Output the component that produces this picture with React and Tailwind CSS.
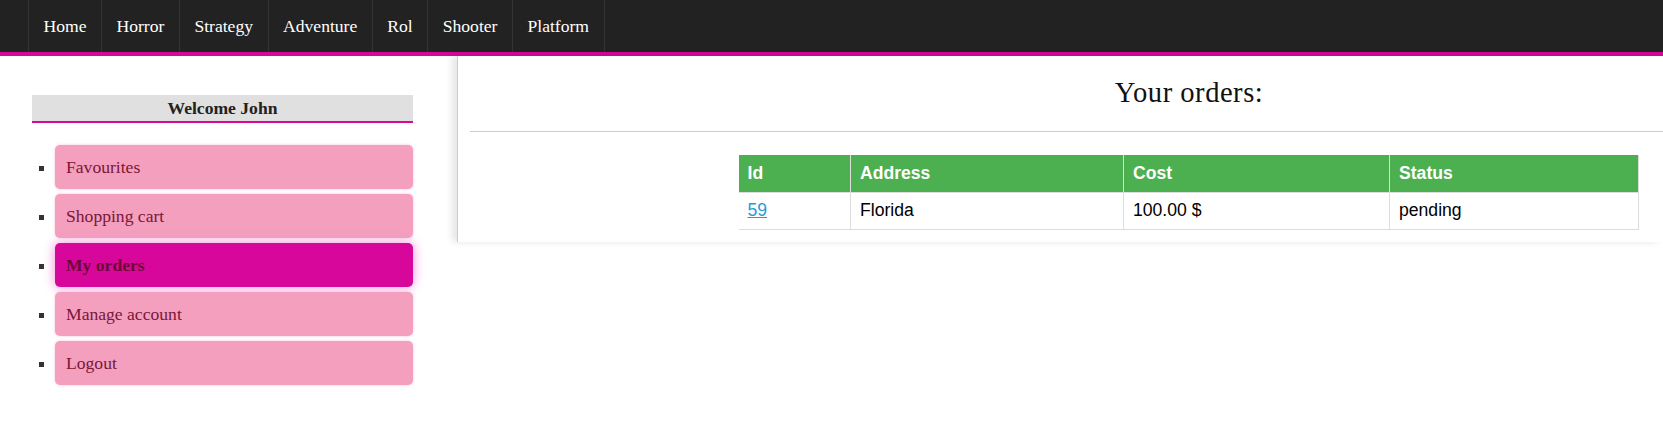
import React from 'react';

const categories = ['Home', 'Horror', 'Strategy', 'Adventure', 'Rol', 'Shooter', 'Platform'];

const menu = [
  { label: 'Favourites' },
  { label: 'Shopping cart' },
  { label: 'My orders', active: true },
  { label: 'Manage account' },
  { label: 'Logout' },
];

const orders = [{ id: 59, address: 'Florida', cost: '100.00 $', status: 'pending' }];

export default function App() {
  return (
    <div className="min-h-[431px] bg-white font-['Liberation_Serif',serif]">
      {/* Top navigation */}
      <nav className="flex h-[56px] border-b-4 border-[#d6079a] bg-[#222222] pl-[28px]">
        {categories.map((c, i) => (
          <a
            key={c}
            href="#"
            className={`border-l border-[#333333] px-[14.5px] text-[17.6px] leading-[52px] text-white ${
              i === categories.length - 1 ? 'border-r' : ''
            }`}
          >
            {c}
          </a>
        ))}
      </nav>

      <div className="flex">
        {/* Sidebar */}
        <aside className="w-[457px] shrink-0 pl-[32px] pt-[39px]">
          <div className="h-[28px] w-[381px] border-b-2 border-[#d6079a] bg-[#e0e0e0] text-center text-[17.6px] font-bold leading-[26px] text-[#222222]">
            Welcome John
          </div>
          <ul className="mt-[22px] w-[381px] list-[square] pl-[23px] text-[#333333]">
            {menu.map((m) => (
              <li key={m.label} className="mb-[5px]">
                <a
                  href="#"
                  className={`block h-[44px] rounded-[5px] pl-[11px] text-[17.6px] leading-[44px] ${
                    m.active
                      ? 'bg-[#d6079a] font-bold text-[#6e0837] shadow-[0_0_12px_#f08ad8]'
                      : 'bg-[#f49fbe] text-[#7a1638] shadow-[0_0_3px_rgba(244,159,190,0.6)]'
                  }`}
                >
                  {m.label}
                </a>
              </li>
            ))}
          </ul>
        </aside>

        {/* Orders panel */}
        <main className="flex-1 self-start border-l border-[#cccccc] bg-white pb-[12px] shadow-[-5px_0_7px_rgba(0,0,0,0.1)]">
          <div className="flex h-[75px] items-center">
            <h2 className="ml-auto mr-[24px] w-[900px] text-center text-[28.6px] font-normal tracking-[0.5px] text-[#111111]">
              Your orders:
            </h2>
          </div>
          <div className="ml-[12px] border-t border-[#cccccc]" />

          <table className="ml-auto mr-[24px] mt-[23px] w-[900px] table-fixed border-collapse font-['Liberation_Sans',sans-serif] text-[17.6px]">
            <colgroup>
              <col className="w-[112px]" />
              <col className="w-[273px]" />
              <col className="w-[266px]" />
              <col className="w-[249px]" />
            </colgroup>
            <thead>
              <tr className="h-[37px] bg-[#4caf50] text-white">
                {['Id', 'Address', 'Cost', 'Status'].map((h) => (
                  <th key={h} className="border-b border-r border-[#dddddd] px-[9px] text-left font-bold">
                    {h}
                  </th>
                ))}
              </tr>
            </thead>
            <tbody>
              {orders.map((o) => (
                <tr key={o.id} className="h-[37px] text-black">
                  <td className="border-b border-r border-[#dddddd] px-[9px]">
                    <a href="#" className="text-[#1e9cdc] underline">{o.id}</a>
                  </td>
                  <td className="border-b border-r border-[#dddddd] px-[9px]">{o.address}</td>
                  <td className="border-b border-r border-[#dddddd] px-[9px]">{o.cost}</td>
                  <td className="border-b border-r border-[#dddddd] px-[9px]">{o.status}</td>
                </tr>
              ))}
            </tbody>
          </table>
        </main>
      </div>
    </div>
  );
}
